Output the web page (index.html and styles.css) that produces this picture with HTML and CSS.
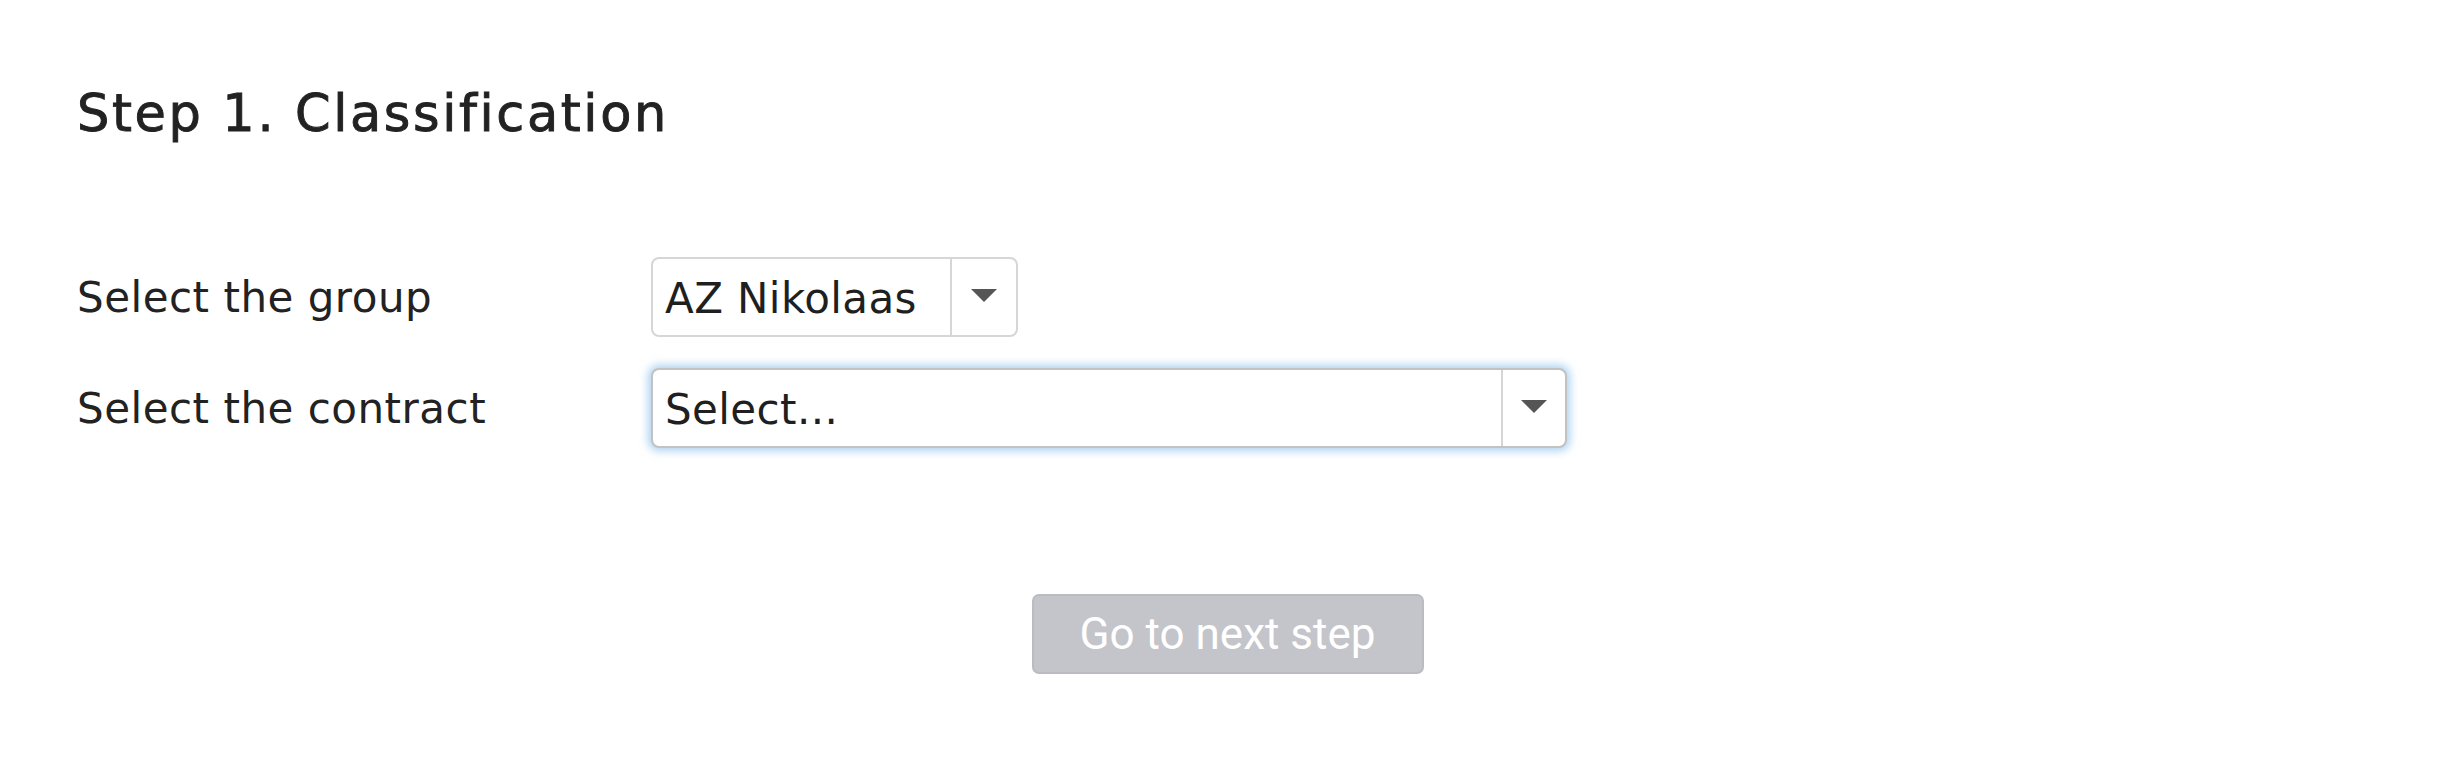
FILE: index.html
```html
<!DOCTYPE html>
<html lang="en">
<head>
<meta charset="utf-8">
<title>Step 1. Classification</title>
<link rel="stylesheet" href="styles.css">
</head>
<body>
<main class="page">
  <h1 class="title">Step 1. Classification</h1>
  <div class="form">
    <div class="row">
      <label class="label">Select the group</label>
      <div class="select select-group">
        <span class="value">AZ Nikolaas</span>
        <span class="toggle"><span class="caret"></span></span>
      </div>
    </div>
    <div class="row">
      <label class="label">Select the contract</label>
      <div class="select select-contract is-focused">
        <span class="value">Select...</span>
        <span class="toggle"><span class="caret"></span></span>
      </div>
    </div>
  </div>
  <div class="actions">
    <button class="btn" type="button" disabled>Go to next step</button>
  </div>
</main>
</body>
</html>
```
FILE: styles.css
```css
html, body {
  margin: 0;
  padding: 0;
  background: #ffffff;
}

.page {
  padding-top: 83px;
  font-family: "DejaVu Sans", "Lato", sans-serif;
  color: #222222;
}

.title {
  margin: 0;
  padding-left: 77px;
  font-size: 51px;
  line-height: 1.2;
  font-weight: 400;
  letter-spacing: 2.6px;
  -webkit-text-stroke: 0.9px #222222;
}

.form {
  margin-top: 113px;
  padding-left: 77px;
  display: flex;
  flex-direction: column;
  gap: 31px;
}

.row {
  display: grid;
  grid-template-columns: 574px auto;
  align-items: center;
}

.label {
  font-size: 42px;
  letter-spacing: 0.5px;
  line-height: 1;
  padding-top: 2px;
}

.select {
  box-sizing: border-box;
  height: 80px;
  display: flex;
  align-items: stretch;
  border: 2px solid #d6d6d6;
  border-radius: 8px;
  background: #ffffff;
}

.select-group {
  width: 367px;
}

.select-contract {
  width: 916px;
}

.select.is-focused {
  border-color: #c2c2c2;
  box-shadow: 0 0 8px 3px rgba(120, 180, 230, 0.6);
}

.value {
  flex: 1;
  display: flex;
  align-items: center;
  padding-left: 12px;
  padding-top: 2px;
  font-size: 42px;
  letter-spacing: 0.4px;
  color: #1f1f1f;
}

.toggle {
  width: 64px;
  display: flex;
  align-items: center;
  justify-content: center;
  border-left: 2px solid #d6d6d6;
}

.select-contract .toggle {
  width: 62px;
}

.caret {
  width: 0;
  height: 0;
  border-left: 13px solid transparent;
  border-right: 13px solid transparent;
  border-top: 13px solid #555555;
  margin-top: -4px;
}

.actions {
  margin-top: 146px;
  display: flex;
  justify-content: center;
}

.btn {
  box-sizing: border-box;
  width: 392px;
  height: 80px;
  margin-left: 1px;
  border: 2px solid #bbbcc1;
  border-radius: 7px;
  background: #c4c5ca;
  color: #ffffff;
  font-family: "Roboto", sans-serif;
  font-size: 44px;
  font-weight: 400;
  padding: 0;
}
```
